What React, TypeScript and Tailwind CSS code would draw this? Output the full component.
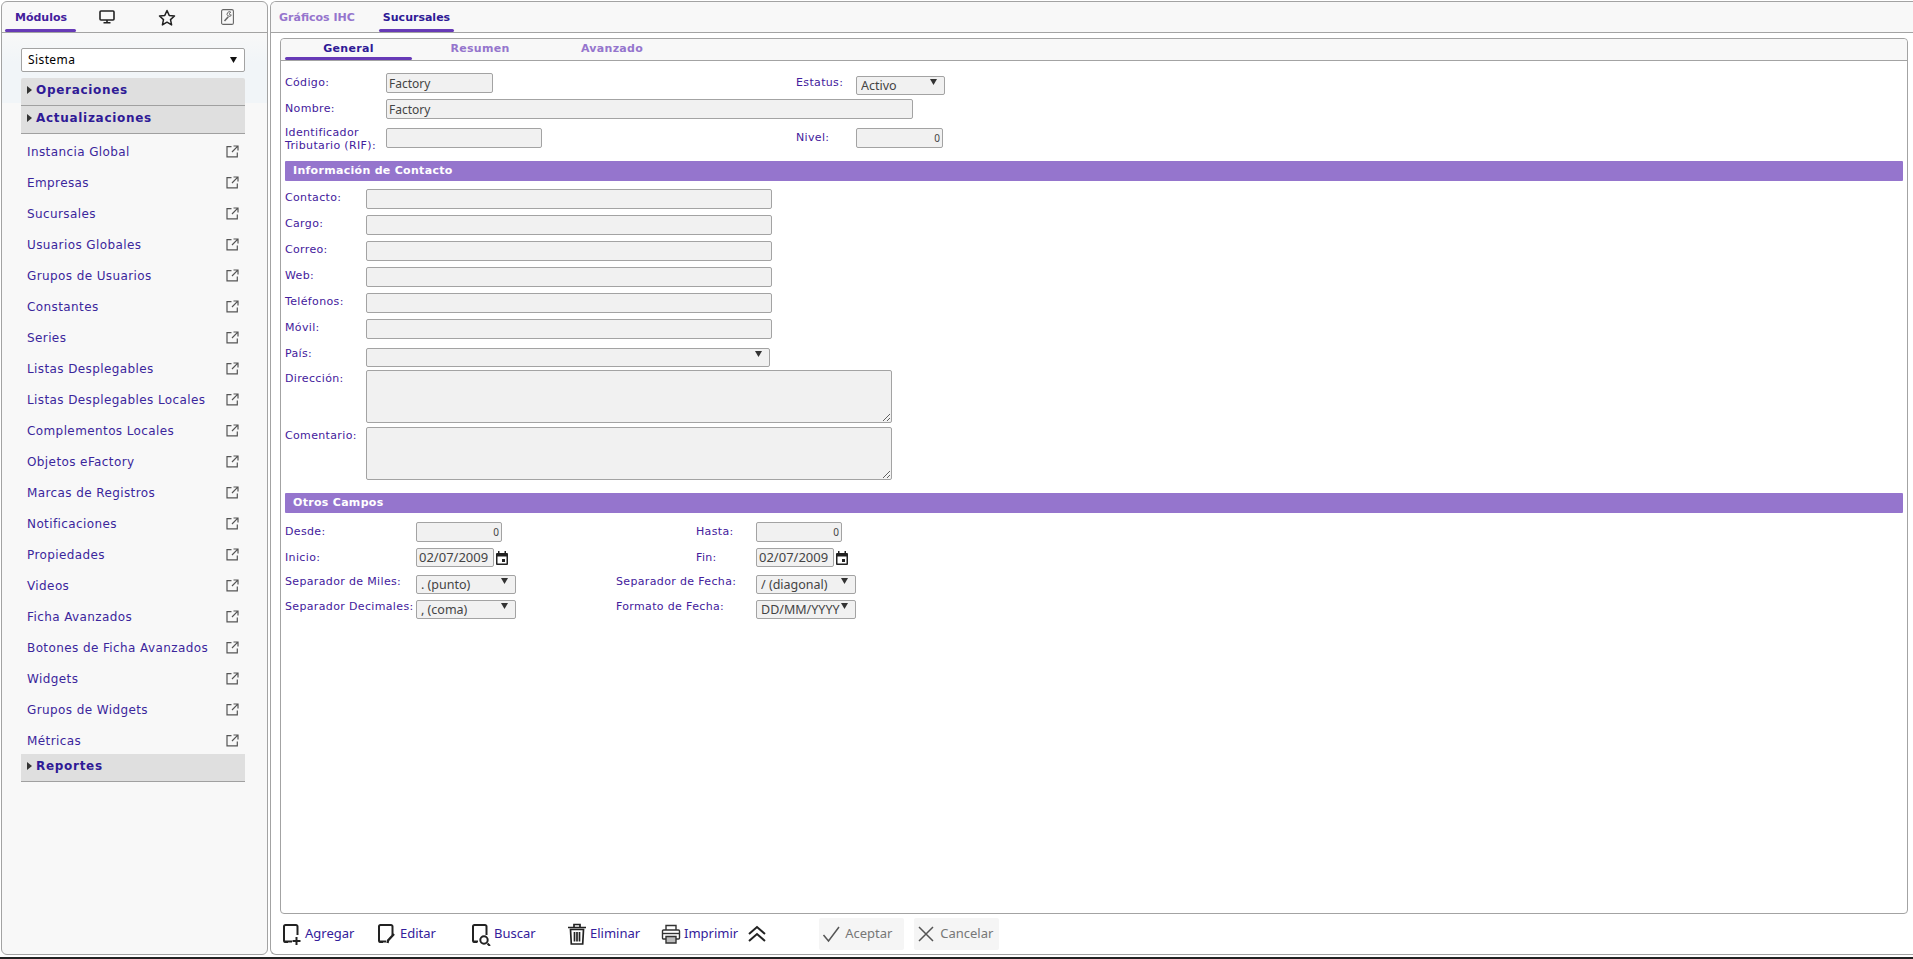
import React from "react";

const menu = ["Instancia Global","Empresas","Sucursales","Usuarios Globales","Grupos de Usuarios","Constantes","Series","Listas Desplegables","Listas Desplegables Locales","Complementos Locales","Objetos eFactory","Marcas de Registros","Notificaciones","Propiedades","Videos","Ficha Avanzados","Botones de Ficha Avanzados","Widgets","Grupos de Widgets","Métricas"];

const Ext = () => (
  <svg width="13" height="13" viewBox="0 0 13 13" fill="none" stroke="#555" strokeWidth="1.2" className="shrink-0">
    <path d="M5.500 1.600H1v10.300h10.300V7.500M7.500 1h4.500v4.500M11.800 1.200 6 7" />
  </svg>
);

const Head = ({ t, className = "" }: { t: string; className?: string }) => (
  <div className={`h-[28px] bg-[#dfdfdf] border-b border-[#a0a0a0] flex items-start pt-[3px] pl-[6px] gap-[4px] ${className}`}>
    <svg width="5" height="8" viewBox="0 0 5 8" className="mt-[5px]"><path d="M0 0l5 4-5 4z" fill="#333" /></svg>
    <span className="text-[12px] leading-[18px] font-bold tracking-[0.7px] text-[#2f1a96]">{t}</span>
  </div>
);

const Label = ({ children, className = "" }: { children: React.ReactNode; className?: string }) => (
  <span className={`text-[11px] leading-[13px] tracking-[0.35px] text-[#43209c] ${className}`}>{children}</span>
);

const inputCls = "h-[20px] bg-[#f1f1f1] border border-[#a3a3a3] rounded-[2px] px-[2px] text-[12px] text-[#444] [font-family:'Noto_Sans',sans-serif] outline-none";

const Input = ({ w, v = "", right = false }: { w: string; v?: string; right?: boolean }) => (
  <input readOnly defaultValue={v} className={`${inputCls} ${w} ${right ? "text-right !text-[10px]" : ""}`} />
);

const Sel = ({ w, v, h = "h-[19px]" }: { w: string; v: string; h?: string }) => (
  <div className={`relative shrink-0 ${w} ${h}`}>
    <select defaultValue={v} className="appearance-none w-full h-full bg-[#f1f1f1] border border-[#a3a3a3] rounded-[2px] pl-[4px] pr-[14px] text-[12.500px] text-[#444] [font-family:'Noto_Sans',sans-serif] outline-none">
      <option>{v}</option>
    </select>
    <svg width="7" height="6" viewBox="0 0 7 6" className="absolute right-[8px] top-[6px]"><path d="M0 0h7L3.500 6z" fill="#333" /></svg>
  </div>
);

const Cal = () => (
  <svg width="12" height="14" viewBox="0 0 12 14" className="ml-[2px]">
    <path d="M2 0h1.500v2h5V0H10v2h1a1 1 0 0 1 1 1v10a1 1 0 0 1-1 1H1a1 1 0 0 1-1-1V3a1 1 0 0 1 1-1h1zM1.500 5.500v7h9v-7z" fill="#222" />
    <rect x="6" y="8" width="3" height="3" fill="#222" />
  </svg>
);

const Section = ({ t, className = "" }: { t: string; className?: string }) => (
  <div className={`h-[20px] bg-[#9575cd] rounded-[1px] pl-[8px] text-[11px] leading-[20px] font-bold tracking-[0.3px] text-white ${className}`}>{t}</div>
);

const Row = ({ l, children, h = "h-[26px]" }: { l: string; children: React.ReactNode; h?: string }) => (
  <div className={`flex items-start ${h}`}>
    <Label className="w-[81px] pt-[2px]">{l}</Label>
    {children}
  </div>
);

const Tool = ({ icon, t, className = "" }: { icon: React.ReactNode; t: string; className?: string }) => (
  <div className={`flex items-center gap-[3px] ${className}`}>
    {icon}
    <span className="text-[13px] text-[#33209a] [font-family:'Noto_Sans',sans-serif]">{t}</span>
  </div>
);

const Doc = "M6 19H3.500A1.500 1.500 0 0 1 2 17.500V3.500A1.500 1.500 0 0 1 3.500 2H14A1.500 1.500 0 0 1 15.500 3.500V12";

export default function App() {
  return (
    <div className="w-[1913px] h-[959px] bg-white overflow-hidden relative [font-family:'DejaVu_Sans',sans-serif]">
      <div className="flex h-[955px] pt-[1px] pl-[1px] gap-[2px]">
        {/* Left */}
        <aside className="w-[267px] shrink-0 border border-[#a3a3a3] rounded-[6px] bg-[#f8f8f8] overflow-hidden">
          <div className="h-[31px] border-b border-[#a3a3a3] flex relative">
            <div className="w-[75px] text-center text-[11px] font-bold leading-[32px] text-[#43209c] pl-[3px]">
              Módulos
              <div className="absolute left-[3px] top-[27px] w-[71px] h-[3px] rounded-full bg-[#673ab7]" />
            </div>
            <div className="w-[60px] flex justify-center items-center">
              <svg width="16" height="14" viewBox="0 0 16 14" fill="none"><rect x="1" y="1" width="14" height="9" rx="1" stroke="#222" strokeWidth="1.600" /><path d="M4.500 12.800h7M8 10v2" stroke="#222" strokeWidth="1.600" /></svg>
            </div>
            <div className="w-[60px] flex justify-center items-center">
              <svg width="18" height="17" viewBox="0 0 18 17" fill="none"><path d="M9 1.500l2.200 4.900 5.300.6-4 3.600 1.100 5.300L9 13.200l-4.600 2.700 1.100-5.300-4-3.600 5.300-.6z" stroke="#222" strokeWidth="1.500" strokeLinejoin="round" /></svg>
            </div>
            <div className="w-[60px] flex justify-center items-center">
              <svg width="13" height="16" viewBox="0 0 13 16" fill="none"><rect x=".6" y=".6" width="11.800" height="14.800" rx="1.500" stroke="#666" strokeWidth="1.100" /><path d="M3.500 12l3.800-4.300" stroke="#666" strokeWidth="1.500" /><path d="M9.800 3.200a2.300 2.300 0 1 0 .6 3L8.800 5.800l-.4-1.400z" stroke="#666" strokeWidth="1" /></svg>
            </div>
          </div>
          <div className="bg-[linear-gradient(#f8f8f8,#f1f5f8_30px,#f1f5f8_70px,#f8f8f8_70px)] pl-[19px] pr-[22px] pt-[15px]">
            <div className="h-[24px] bg-white border border-[#a3a3a3] rounded-[2px] flex items-center justify-between pl-[6px] pr-[7px] text-[12px] tracking-[0.4px] text-black [font-family:'Noto_Sans',sans-serif]">
              Sistema
              <svg width="7" height="6" viewBox="0 0 7 6"><path d="M0 0h7L3.500 6z" fill="#111" /></svg>
            </div>
            <Head t="Operaciones" className="mt-[6px] rounded-t-[2px]" />
            <Head t="Actualizaciones" />
            <ul className="pt-[2px]">
              {menu.map((m) => (
                <li key={m} className="h-[31px] flex items-center justify-between pl-[6px] pr-[6px]">
                  <span className="text-[12px] tracking-[0.4px] text-[#3b269c] [font-family:'DejaVu_Sans',sans-serif]">{m}</span>
                  <Ext />
                </li>
              ))}
            </ul>
            <Head t="Reportes" className="-mt-[2px]" />
          </div>
        </aside>

        {/* Right */}
        <main className="flex-1 border border-[#a3a3a3] border-r-0 rounded-l-[6px] flex flex-col overflow-hidden">
          <div className="h-[31px] shrink-0 border-b border-[#a3a3a3] bg-[#f8f8f8] flex text-[11px] font-bold">
            <div className="w-[108px] pl-[8px] leading-[32px] text-[#9575cd] whitespace-nowrap">Gráficos IHC</div>
            <div className="relative w-[75px] text-center leading-[32px] text-[#2f1a96]">
              Sucursales
              <div className="absolute left-0 top-[27px] w-[75px] h-[3px] rounded-full bg-[#673ab7]" />
            </div>
          </div>
          <div className="ml-[9px] mt-[5px] mr-[5px] flex-1 border border-[#a3a3a3] rounded-[4px] flex flex-col">
            <div className="h-[22px] shrink-0 bg-[#f8f8f8] rounded-t-[4px] border-b border-[#a3a3a3] flex text-[11px] font-bold tracking-[0.3px] px-[4px]">
              <div className="relative w-[127px] text-center leading-[20px] text-[#2f1a96]">General
                <div className="absolute left-0 top-[18px] w-[127px] h-[3px] rounded-full bg-[#673ab7]" />
              </div>
              <div className="w-[136px] text-center leading-[20px] text-[#9575cd]">Resumen</div>
              <div w-data="" className="w-[128px] text-center leading-[20px] text-[#9575cd]">Avanzado</div>
            </div>
            <div className="flex-1 px-[4px] pt-[12px]">
              <div className="flex h-[26px]">
                <Label className="w-[101px] pt-[3px]">Código:</Label>
                <Input w="w-[107px]" v="Factory" />
                <Label className="ml-[303px] w-[60px] pt-[3px]">Estatus:</Label>
                <Sel w="w-[89px]" v="Activo" />
              </div>
              <div className="flex h-[29px]">
                <Label className="w-[101px] pt-[3px]">Nombre:</Label>
                <Input w="w-[527px]" v="Factory" />
              </div>
              <div className="flex h-[33px]">
                <Label className="w-[101px] -mt-[2px]">Identificador<br />Tributario (RIF):</Label>
                <Input w="w-[156px]" />
                <Label className="ml-[254px] w-[60px] pt-[3px]">Nivel:</Label>
                <Input w="w-[87px]" v="0" right />
              </div>
              <Section t="Información de Contacto" />
              <div className="pt-[8px]">
                {["Contacto:","Cargo:","Correo:","Web:","Teléfonos:","Móvil:"].map((l) => (
                  <Row key={l} l={l}><Input w="w-[406px]" /></Row>
                ))}
                <Row l="País:" h="h-[25px]"><Sel w="w-[404px]" v="" /></Row>
                <Row l="Dirección:" h="h-[57px]"><textarea readOnly className="w-[526px] h-[53px] bg-[#f1f1f1] border border-[#a3a3a3] rounded-[2px] outline-none" /></Row>
                <Row l="Comentario:" h="h-[58px]"><textarea readOnly className="w-[526px] h-[53px] bg-[#f1f1f1] border border-[#a3a3a3] rounded-[2px] outline-none" /></Row>
              </div>
              <Section t="Otros Campos" className="mt-[8px]" />
              <div className="pt-[9px] grid grid-cols-[131px_200px_140px_1fr] grid-rows-[26px_24px_25px_25px]">
                <Label className="pt-[3px]">Desde:</Label>
                <div className="flex"><Input w="w-[86px]" v="0" right /></div>
                <Label className="pt-[3px] pl-[80px] whitespace-nowrap">Hasta:</Label>
                <div className="flex"><Input w="w-[86px]" v="0" right /></div>
                <Label className="pt-[3px]">Inicio:</Label>
                <div className="flex items-center h-[19px]"><Input w="w-[78px] !h-[19px] !text-[13px]" v="02/07/2009" /><Cal /></div>
                <Label className="pt-[3px] pl-[80px]">Fin:</Label>
                <div className="flex items-center h-[19px]"><Input w="w-[78px] !h-[19px] !text-[13px]" v="02/07/2009" /><Cal /></div>
                <Label className="pt-[3px] whitespace-nowrap">Separador de Miles:</Label>
                <div className="flex"><Sel w="w-[100px]" v=". (punto)" /></div>
                <Label className="pt-[3px] whitespace-nowrap">Separador de Fecha:</Label>
                <div className="flex"><Sel w="w-[100px]" v="/ (diagonal)" /></div>
                <Label className="pt-[3px] whitespace-nowrap">Separador Decimales:</Label>
                <div className="flex"><Sel w="w-[100px]" v=", (coma)" /></div>
                <Label className="pt-[3px] whitespace-nowrap">Formato de Fecha:</Label>
                <div className="flex"><Sel w="w-[100px]" v="DD/MM/YYYY" /></div>
              </div>
            </div>
          </div>
          <div className="h-[40px] shrink-0 pl-[11px] flex items-center">
            <Tool className="w-[95px]" t="Agregar" icon={
              <svg width="20" height="23" viewBox="0 0 20 23" fill="none" stroke="#222" strokeWidth="2"><path d={Doc} /><path d="M2 18.500h8M14.500 14v8M10.500 18h8" /></svg>
            } />
            <Tool className="w-[94px]" t="Editar" icon={
              <svg width="20" height="23" viewBox="0 0 20 23" fill="none" stroke="#222" strokeWidth="2"><path d={Doc} /><path d="M2 18.500h7" /><path d="M10.500 20l.5-2.500 6-6.500" strokeWidth="2.400" /></svg>
            } />
            <Tool className="w-[96px]" t="Buscar" icon={
              <svg width="20" height="23" viewBox="0 0 20 23" fill="none" stroke="#222" strokeWidth="2"><path d={Doc} /><path d="M2 18.500h5M16.500 20.500l2.500 2.500" /><circle cx="13" cy="17" r="3.700" /></svg>
            } />
            <Tool className="w-[94px]" t="Eliminar" icon={
              <svg width="20" height="22" viewBox="0 0 20 22" fill="none" stroke="#222" strokeWidth="1.700"><path d="M1 4.500h18M7 4V1.500h6V4M3.500 6.500 4.300 21h11.400l.8-14.500zM7.500 9v9.500M10 9v9.500M12.500 9v9.500" /></svg>
            } />
            <Tool t="Imprimir" icon={
              <svg width="20" height="20" viewBox="0 0 20 20" fill="none" stroke="#333" strokeWidth="1.400"><path d="M5 6V1.500h10V6M5 15H2.500a1 1 0 0 1-1-1V7a1 1 0 0 1 1-1h15a1 1 0 0 1 1 1v7a1 1 0 0 1-1 1H15" /><path d="M1.500 9.500h17" /><path d="M5 12.500h10V19H5z" fill="#bbb" /></svg>
            } />
            <svg width="20" height="18" viewBox="0 0 20 18" fill="none" stroke="#222" strokeWidth="2" className="ml-[9px]"><path d="M2 9l8-7 8 7M2 16l8-7 8 7" /></svg>
            <div className="ml-[52px] w-[85px] h-[32px] bg-[#f5f5f5] flex items-center pl-[3px] gap-[5px] rounded-[2px]">
              <svg width="18" height="18" viewBox="0 0 18 18" fill="none" stroke="#555" strokeWidth="1.500"><path d="M1.500 10l5 6L17 2" /></svg>
              <span className="text-[13px] text-[#777] [font-family:'Noto_Sans',sans-serif]">Aceptar</span>
            </div>
            <div className="ml-[10px] w-[85px] h-[32px] bg-[#f5f5f5] flex items-center pl-[3px] gap-[5px] rounded-[2px]">
              <svg width="18" height="18" viewBox="0 0 18 18" fill="none" stroke="#555" strokeWidth="1.500"><path d="M2 2l14 14M16 2 2 16" /></svg>
              <span className="text-[13px] text-[#777] [font-family:'Noto_Sans',sans-serif]">Cancelar</span>
            </div>
          </div>
        </main>
      </div>
      <div className="absolute left-0 right-0 bottom-0 h-[2px] bg-[#222]" />
    </div>
  );
}
